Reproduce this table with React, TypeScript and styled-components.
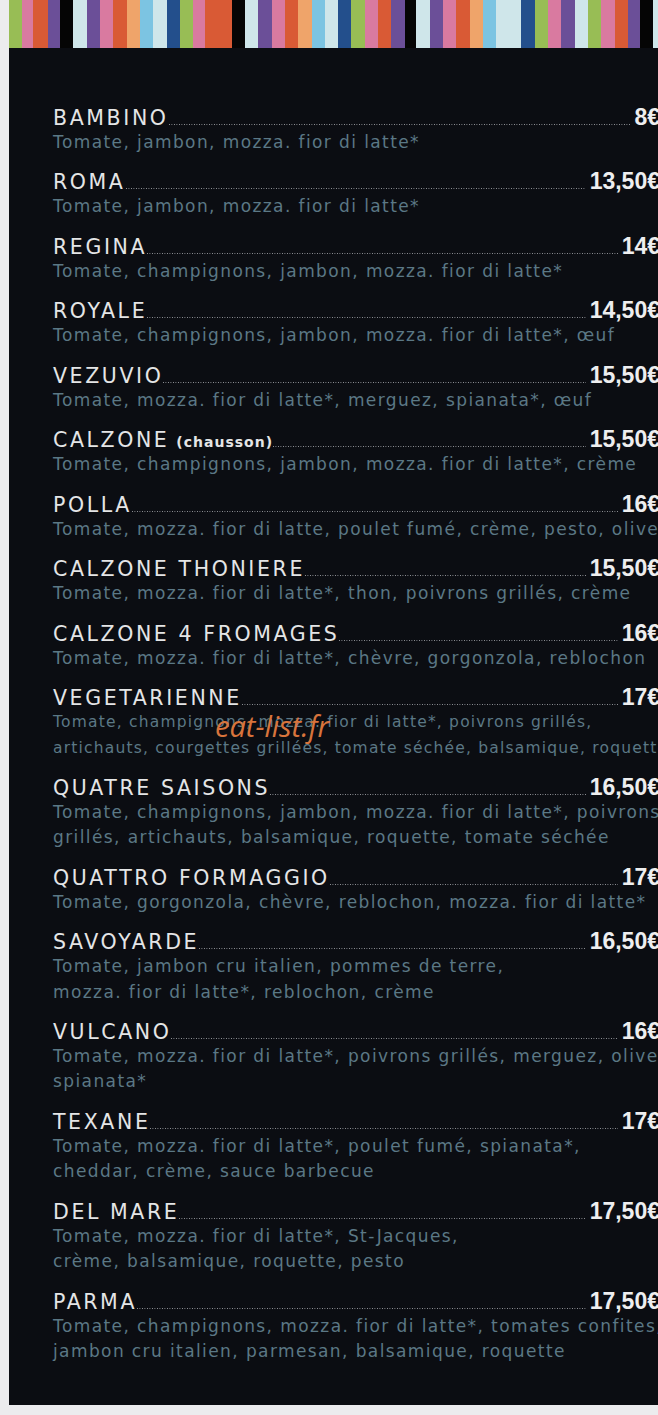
import React from 'react';
import styled, { createGlobalStyle } from 'styled-components';

const GlobalStyle = createGlobalStyle`
  html, body {
    margin: 0;
    padding: 0;
    background: #ececee;
    overflow: hidden;
  }
`;

const colors: Record<string, string> = {
  g: '#98bd55',
  p: '#d97aa0',
  o: '#d95a35',
  v: '#6b4f98',
  k: '#050505',
  w: '#cfe6ea',
  l: '#efa46a',
  s: '#7cc4e2',
  b: '#234f8c',
};

// [colour key, right edge x]
const stripes: [string, number][] = [
  ['g', 22], ['p', 33], ['o', 48], ['v', 60], ['k', 73], ['w', 87], ['v', 100], ['p', 113],
  ['o', 127], ['l', 140], ['s', 153], ['w', 167], ['b', 180], ['g', 193], ['p', 205], ['o', 232],
  ['k', 245], ['w', 258], ['v', 272], ['p', 285], ['o', 298], ['l', 312], ['s', 325], ['w', 338],
  ['b', 351], ['g', 365], ['p', 378], ['o', 391], ['v', 405], ['k', 416], ['w', 430], ['v', 443],
  ['p', 456], ['o', 470], ['l', 483], ['s', 496], ['w', 521], ['b', 535], ['g', 548], ['p', 561],
  ['v', 575], ['w', 588], ['g', 601], ['p', 615], ['o', 628], ['v', 640], ['k', 653], ['w', 658],
];

type Pizza = { name: string; note?: string; price: string; lines: string[]; tight?: boolean };

const pizzas: Pizza[] = [
  { name: 'BAMBINO', price: '8€', lines: ['Tomate, jambon, mozza. fior di latte*'] },
  { name: 'ROMA', price: '13,50€', lines: ['Tomate, jambon, mozza. fior di latte*'] },
  { name: 'REGINA', price: '14€', lines: ['Tomate, champignons, jambon, mozza. fior di latte*'] },
  { name: 'ROYALE', price: '14,50€', lines: ['Tomate, champignons, jambon, mozza. fior di latte*, œuf'] },
  { name: 'VEZUVIO', price: '15,50€', lines: ['Tomate, mozza. fior di latte*, merguez, spianata*, œuf'] },
  { name: 'CALZONE', note: '(chausson)', price: '15,50€', lines: ['Tomate, champignons, jambon, mozza. fior di latte*, crème'] },
  { name: 'POLLA', price: '16€', lines: ['Tomate, mozza. fior di latte, poulet fumé, crème, pesto, olives'] },
  { name: 'CALZONE THONIERE', price: '15,50€', lines: ['Tomate, mozza. fior di latte*, thon, poivrons grillés, crème'] },
  { name: 'CALZONE 4 FROMAGES', price: '16€', lines: ['Tomate, mozza. fior di latte*, chèvre, gorgonzola, reblochon'] },
  {
    name: 'VEGETARIENNE',
    price: '17€',
    tight: true,
    lines: [
      'Tomate, champignons, mozza. fior di latte*, poivrons grillés,',
      'artichauts, courgettes grillées, tomate séchée, balsamique, roquette',
    ],
  },
  {
    name: 'QUATRE SAISONS',
    price: '16,50€',
    lines: [
      'Tomate, champignons, jambon, mozza. fior di latte*, poivrons',
      'grillés, artichauts, balsamique, roquette, tomate séchée',
    ],
  },
  { name: 'QUATTRO FORMAGGIO', price: '17€', lines: ['Tomate, gorgonzola, chèvre, reblochon, mozza. fior di latte*'] },
  {
    name: 'SAVOYARDE',
    price: '16,50€',
    lines: ['Tomate, jambon cru italien, pommes de terre,', 'mozza. fior di latte*, reblochon, crème'],
  },
  {
    name: 'VULCANO',
    price: '16€',
    lines: ['Tomate, mozza. fior di latte*, poivrons grillés, merguez, olives,', 'spianata*'],
  },
  {
    name: 'TEXANE',
    price: '17€',
    lines: ['Tomate, mozza. fior di latte*, poulet fumé, spianata*,', 'cheddar, crème, sauce barbecue'],
  },
  {
    name: 'DEL MARE',
    price: '17,50€',
    lines: ['Tomate, mozza. fior di latte*, St-Jacques,', 'crème, balsamique, roquette, pesto'],
  },
  {
    name: 'PARMA',
    price: '17,50€',
    lines: [
      'Tomate, champignons, mozza. fior di latte*, tomates confites,',
      'jambon cru italien, parmesan, balsamique, roquette',
    ],
  },
];

const Page = styled.div`
  width: 649px;
  padding-left: 9px;
`;

const StripeBar = styled.div`
  display: flex;
  height: 48px;
`;

const Stripe = styled.div<{ $c: string; $w: number }>`
  flex: none;
  width: ${(p) => p.$w}px;
  background: ${(p) => p.$c};
`;

const Panel = styled.div`
  position: relative;
  height: 1357px;
  box-sizing: border-box;
  padding: 56px 0 0 44px;
  background: #0b0d12;
  overflow: hidden;
`;

const List = styled.div`
  width: 607px;
  display: flex;
  flex-direction: column;
  gap: 13.2px;
`;

const Item = styled.div`
  display: flex;
  flex-direction: column;
`;

const TitleRow = styled.div`
  display: flex;
  align-items: baseline;
  height: 26px;
  line-height: 26px;
`;

const Name = styled.span`
  flex: none;
  font-family: 'DejaVu Sans', sans-serif;
  font-size: 20.5px;
  letter-spacing: 2.6px;
  color: #e4e5e6;
`;

const Note = styled.span`
  font-size: 14px;
  font-weight: 700;
  letter-spacing: 1px;
  margin-left: 1px;
`;

const Leader = styled.span`
  flex: 1;
  height: 1px;
  margin: 0 4px 0 0;
  background-image: linear-gradient(to right, #9a9ca1 50%, transparent 50%);
  background-size: 2.5px 1px;
  background-repeat: repeat-x;
`;

const Price = styled.span`
  flex: none;
  font-family: 'Liberation Sans', Arial, sans-serif;
  font-size: 23px;
  font-weight: 700;
  color: #eeeeef;
`;

const Desc = styled.div<{ $tight?: boolean }>`
  font-family: 'DejaVu Sans', sans-serif;
  font-size: ${(p) => (p.$tight ? '15.5px' : '17px')};
  letter-spacing: ${(p) => (p.$tight ? '1.2px' : '1.4px')};
  line-height: 25.3px;
  color: #5b7885;
  white-space: nowrap;
`;

const Watermark = styled.div`
  position: absolute;
  left: 206px;
  top: 658px;
  font-family: 'Open Sans', sans-serif;
  font-style: italic;
  font-size: 29px;
  color: #d8743c;
`;

export default function App() {
  let prev = 9;
  return (
    <Page>
      <GlobalStyle />
      <StripeBar>
        {stripes.map(([c, x], i) => {
          const w = x - prev;
          prev = x;
          return <Stripe key={i} $c={colors[c]} $w={w} />;
        })}
      </StripeBar>
      <Panel>
        <List>
          {pizzas.map((p) => (
            <Item key={p.name + p.price}>
              <TitleRow>
                <Name>
                  {p.name}
                  {p.note && <Note> {p.note}</Note>}
                </Name>
                <Leader />
                <Price>{p.price}</Price>
              </TitleRow>
              {p.lines.map((l) => (
                <Desc key={l} $tight={p.tight}>
                  {l}
                </Desc>
              ))}
            </Item>
          ))}
        </List>
        <Watermark>eat-list.fr</Watermark>
      </Panel>
    </Page>
  );
}
